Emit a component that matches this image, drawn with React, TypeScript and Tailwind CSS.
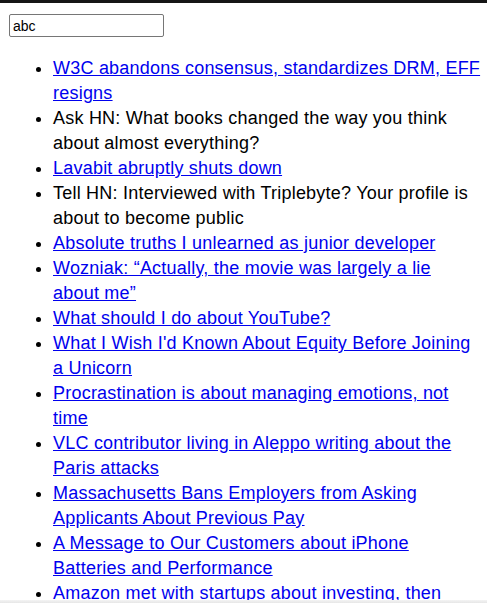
const items: { title: string[]; link: boolean }[] = [
  { title: ["W3C abandons consensus, standardizes DRM, EFF", "resigns"], link: true },
  { title: ["Ask HN: What books changed the way you think", "about almost everything?"], link: false },
  { title: ["Lavabit abruptly shuts down"], link: true },
  { title: ["Tell HN: Interviewed with Triplebyte? Your profile is", "about to become public"], link: false },
  { title: ["Absolute truths I unlearned as junior developer"], link: true },
  { title: ["Wozniak: “Actually, the movie was largely a lie", "about me”"], link: true },
  { title: ["What should I do about YouTube?"], link: true },
  { title: ["What I Wish I'd Known About Equity Before Joining", "a Unicorn"], link: true },
  { title: ["Procrastination is about managing emotions, not", "time"], link: true },
  { title: ["VLC contributor living in Aleppo writing about the", "Paris attacks"], link: true },
  { title: ["Massachusetts Bans Employers from Asking", "Applicants About Previous Pay"], link: true },
  { title: ["A Message to Our Customers about iPhone", "Batteries and Performance"], link: true },
  { title: ["Amazon met with startups about investing, then", "launched competing products"], link: true },
];

function Lines({ lines }: { lines: string[] }) {
  return (
    <>
      {lines.map((line, j) => (
        <span key={j} className="whitespace-nowrap">
          {j > 0 && <br />}
          {line}
        </span>
      ))}
    </>
  );
}

export default function App() {
  return (
    <div className="min-h-screen bg-white font-['Liberation_Sans',Arial,sans-serif] text-black">
      <div className="h-[3px] bg-[#151515]" />
      <div className="px-[9px] pt-[11px]">
        <input
          defaultValue="abc"
          className="block h-[23px] w-[155px] rounded-[2px] border border-[#767676] px-[3px] text-[14px] leading-none outline-none"
        />
      </div>
      <ul className="mt-[19px] list-disc pl-[53px] text-[18px] leading-[25px] tracking-[0.22px]">
        {items.map((item, i) => (
          <li key={i}>
            {item.link ? (
              <a href="#" className="text-[#0000ee] underline">
                <Lines lines={item.title} />
              </a>
            ) : (
              <Lines lines={item.title} />
            )}
          </li>
        ))}
      </ul>
      <div className="fixed bottom-0 left-0 right-0 h-[3px] bg-gradient-to-b from-[#f4f4f4] to-[#e6e6e6]" />
    </div>
  );
}
